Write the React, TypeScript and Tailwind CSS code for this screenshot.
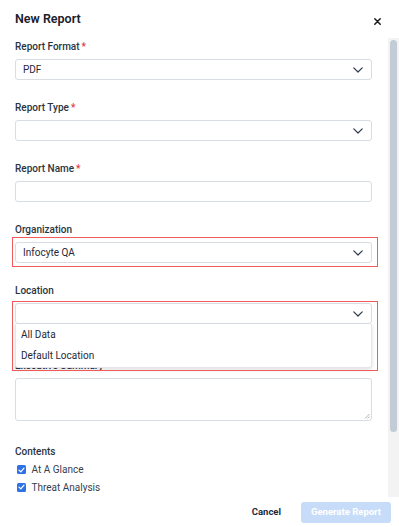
import React from "react";

function Chevron() {
  return (
    <svg width="10" height="6" viewBox="0 0 10 6" fill="none" className="shrink-0">
      <path d="M0.8 0.9 L5 5 L9.2 0.9" stroke="#2d3a4a" strokeWidth="1.2" strokeLinecap="round" strokeLinejoin="round" />
    </svg>
  );
}

function Label({ text, required }: { text: string; required?: boolean }) {
  return (
    <div className="h-[14px] leading-[17px] text-[10px] font-medium text-[#2a3441] whitespace-nowrap">
      {text}
      {required && <span className="text-[#e23b3b] ml-[2px]">*</span>}
    </div>
  );
}

function Select({ value }: { value?: string }) {
  return (
    <div className="h-[21px] w-[357px] border border-[#d8dde3] rounded-[3px] bg-white flex items-center justify-between pl-[7px] pr-[8px]">
      <span className="text-[10px] text-[#1f2937]">{value ?? ""}</span>
      <Chevron />
    </div>
  );
}

function Check({ text }: { text: string }) {
  return (
    <div className="h-[17.5px] flex items-center pl-[1.5px]">
      <div className="w-[9px] h-[9px] rounded-[1.5px] bg-[#2f72e6] flex items-center justify-center">
        <svg width="7" height="6" viewBox="0 0 7 6" fill="none">
          <path d="M1 3.1 L2.8 4.8 L6 1.2" stroke="white" strokeWidth="1.2" strokeLinecap="round" strokeLinejoin="round" />
        </svg>
      </div>
      <span className="ml-[6px] text-[10px] text-[#374151]">{text}</span>
    </div>
  );
}

export default function App() {
  return (
    <div className="w-[399px] h-[527px] bg-white flex flex-col overflow-hidden font-['Roboto',sans-serif]">
      <div className="h-[38px] shrink-0 flex items-start justify-between pl-[15px] pr-[18px]">
        <div className="mt-[9.5px] text-[12.5px] leading-[17px] font-semibold text-[#1a202c]">New Report</div>
        <svg width="7" height="7" viewBox="0 0 7 7" className="mt-[17.5px]">
          <path d="M0.8 0.8 L6.2 6.2 M6.2 0.8 L0.8 6.2" stroke="#1a1a1a" strokeWidth="1.5" strokeLinecap="round" />
        </svg>
      </div>

      <div className="flex-1 flex min-h-0">
        <div className="flex-1 overflow-hidden pl-[15px]">
          <Label text="Report Format" required />
          <div className="mt-[7px] mb-[19px]"><Select value="PDF" /></div>

          <Label text="Report Type" required />
          <div className="mt-[7px] mb-[19px]"><Select /></div>

          <Label text="Report Name" required />
          <div className="mt-[7px] mb-[19px] h-[21px] w-[357px] border border-[#d8dde3] rounded-[3px]" />

          <Label text="Organization" />
          <div className="mt-[7px] mb-[19px] relative w-[357px]">
            <Select value="Infocyte QA" />
            <div className="absolute -left-[3px] -right-[6px] -top-[5px] -bottom-[4px] border-[1.5px] border-[#ef5a5a]" />
          </div>

          <Label text="Location" />
          <div className="mt-[7px] mb-[33px] relative w-[357px] z-10">
            <Select />
            <div className="absolute left-0 right-0 top-[21px] h-[44px] bg-white border border-t-0 border-[#e3e6ea] rounded-b-[3px] shadow-[0_2px_4px_rgba(0,0,0,0.12)]">
              <div className="h-[20.5px] flex items-center pl-[5px] text-[10px] text-[#1f2937]">All Data</div>
              <div className="h-[21px] flex items-center pl-[5px] text-[10px] text-[#1f2937]">Default Location</div>
            </div>
            <div className="absolute -left-[3px] -right-[6px] -top-[2px] -bottom-[47px] border-[1.5px] border-[#ef5a5a]" />
          </div>

          <Label text="Executive Summary" />
          <div className="mt-[7px] relative h-[43px] w-[357px] border border-[#d8dde3] rounded-[3px]">
            <svg width="6" height="6" viewBox="0 0 6 6" className="absolute right-[1px] bottom-[1px]">
              <path d="M1 5.5 L5.5 1 M3.5 5.5 L5.5 3.5" stroke="#9aa3ad" strokeWidth="0.8" />
            </svg>
          </div>

          <div className="mt-[22px]"><Label text="Contents" /></div>
          <div className="mt-[4px]">
            <Check text="At A Glance" />
            <Check text="Threat Analysis" />
          </div>
        </div>
        <div className="w-[11px] shrink-0 bg-[#f3f3f3] pt-[2px] pl-[2px]">
          <div className="w-[7px] h-[392px] rounded-full bg-[#c3ccd6]" />
        </div>
      </div>

      <div className="h-[30px] shrink-0 flex items-center justify-end pr-[8px]">
        <span className="text-[9.5px] font-bold text-[#1f2937] mr-[20px]">Cancel</span>
        <div className="h-[21px] w-[90px] rounded-[3px] bg-[#c7dcf9] flex items-center justify-center text-[9.5px] font-bold text-white">
          Generate Report
        </div>
      </div>
    </div>
  );
}
